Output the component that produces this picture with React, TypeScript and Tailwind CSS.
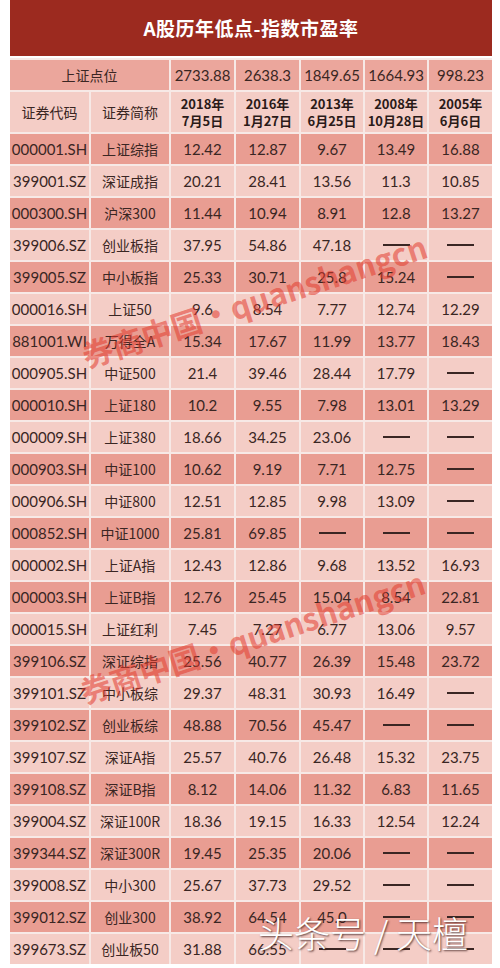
import * as React from "react";

const DASH = "——";

const points = ["2733.88", "2638.3", "1849.65", "1664.93", "998.23"];
const dates = [
  ["2018年", "7月5日"],
  ["2016年", "1月27日"],
  ["2013年", "6月25日"],
  ["2008年", "10月28日"],
  ["2005年", "6月6日"],
];

const rows: string[][] = [
  ["000001.SH", "上证综指", "12.42", "12.87", "9.67", "13.49", "16.88"],
  ["399001.SZ", "深证成指", "20.21", "28.41", "13.56", "11.3", "10.85"],
  ["000300.SH", "沪深300", "11.44", "10.94", "8.91", "12.8", "13.27"],
  ["399006.SZ", "创业板指", "37.95", "54.86", "47.18", DASH, DASH],
  ["399005.SZ", "中小板指", "25.33", "30.71", "25.8", "15.24", DASH],
  ["000016.SH", "上证50", "9.6", "8.54", "7.77", "12.74", "12.29"],
  ["881001.WI", "万得全A", "15.34", "17.67", "11.99", "13.77", "18.43"],
  ["000905.SH", "中证500", "21.4", "39.46", "28.44", "17.79", DASH],
  ["000010.SH", "上证180", "10.2", "9.55", "7.98", "13.01", "13.29"],
  ["000009.SH", "上证380", "18.66", "34.25", "23.06", DASH, DASH],
  ["000903.SH", "中证100", "10.62", "9.19", "7.71", "12.75", DASH],
  ["000906.SH", "中证800", "12.51", "12.85", "9.98", "13.09", DASH],
  ["000852.SH", "中证1000", "25.81", "69.85", DASH, DASH, DASH],
  ["000002.SH", "上证A指", "12.43", "12.86", "9.68", "13.52", "16.93"],
  ["000003.SH", "上证B指", "12.76", "25.45", "15.04", "8.54", "22.81"],
  ["000015.SH", "上证红利", "7.45", "7.27", "6.77", "13.06", "9.57"],
  ["399106.SZ", "深证综指", "25.56", "40.77", "26.39", "15.48", "23.72"],
  ["399101.SZ", "中小板综", "29.37", "48.31", "30.93", "16.49", DASH],
  ["399102.SZ", "创业板综", "48.88", "70.56", "45.47", DASH, DASH],
  ["399107.SZ", "深证A指", "25.57", "40.76", "26.48", "15.32", "23.75"],
  ["399108.SZ", "深证B指", "8.12", "14.06", "11.32", "6.83", "11.65"],
  ["399004.SZ", "深证100R", "18.36", "19.15", "16.33", "12.54", "12.24"],
  ["399344.SZ", "深证300R", "19.45", "25.35", "20.06", DASH, DASH],
  ["399008.SZ", "中小300", "25.67", "37.73", "29.52", DASH, DASH],
  ["399012.SZ", "创业300", "38.92", "64.54", "45.0", DASH, DASH],
  ["399673.SZ", "创业板50", "31.88", "66.55", DASH, DASH, DASH],
];

const grid = "grid grid-cols-[79px_78px_63px_63px_62px_62px_63px] gap-x-[2px]";

function Watermark({ pos }: { pos: string }) {
  return (
    <div
      className={`absolute ${pos} -translate-x-1/2 -translate-y-1/2 rotate-[-18deg] text-[31px] font-bold text-[#e23a2c]/55 whitespace-nowrap font-['Noto_Sans_CJK_SC',sans-serif] leading-none`}
    >
      券商中国·quanshangcn
    </div>
  );
}

export default function App() {
  return (
    <div
      className="relative w-[500px] h-[968px] overflow-hidden bg-white text-[#3a2623]"
      style={{ fontFamily: "Lato, 'Noto Sans CJK SC', sans-serif" }}
    >
      <div className="ml-[10px] w-[482px] flex flex-col gap-y-[2px] bg-[#f7e9e6]">
        <div className="h-[58px] bg-[#9c2a1f] flex items-center justify-center text-white text-[19px] font-bold tracking-[0.5px] font-['Noto_Sans_CJK_SC',sans-serif] border-b-[2px] border-white">
          A股历年低点-指数市盈率
        </div>
        <div className={`${grid} h-[30px] text-[15px]`}>
          <div className="col-span-2 bg-[#eba69c] flex items-center justify-center font-['Noto_Sans_CJK_SC',sans-serif] text-[14px]">
            上证点位
          </div>
          {points.map((p) => (
            <div key={p} className="bg-[#eba69c] flex items-center justify-center">
              {p}
            </div>
          ))}
        </div>
        <div className={`${grid} h-[40px]`}>
          <div className="bg-[#f4cdc6] flex items-center justify-center text-[14px] font-['Noto_Sans_CJK_SC',sans-serif]">
            证券代码
          </div>
          <div className="bg-[#f4cdc6] flex items-center justify-center text-[14px] font-['Noto_Sans_CJK_SC',sans-serif]">
            证券简称
          </div>
          {dates.map((d) => (
            <div
              key={d[0]}
              className="bg-[#f4cdc6] flex flex-col items-center justify-center text-[13px] font-bold leading-[17px] font-['Noto_Sans_CJK_SC',sans-serif] text-[#2a1a18]"
            >
              <span>{d[0]}</span>
              <span>{d[1]}</span>
            </div>
          ))}
        </div>
        {rows.map((r, i) => (
          <div key={r[0]} className={`${grid} h-[30px] text-[15px]`}>
            {r.map((c, j) => (
              <div
                key={j}
                className={`${i % 2 === 0 ? "bg-[#e99d92]" : "bg-[#f4cdc6]"} flex items-center justify-center ${
                  j === 1 ? "font-['Noto_Sans_CJK_SC',sans-serif] text-[14px]" : ""
                }`}
              >
                {c === DASH ? (
                  <span className="block w-[27px] h-[1.5px] bg-[#3a2623]" aria-label={DASH} />
                ) : (
                  c
                )}
              </div>
            ))}
          </div>
        ))}
      </div>

      {/* watermarks */}
      <Watermark pos="left-[254px] top-[300px]" />
      <Watermark pos="left-[252px] top-[636px]" />
      <div
        className="absolute left-[258px] top-[914px] text-[36px] font-light text-white whitespace-nowrap font-['Noto_Sans_CJK_SC',sans-serif] leading-none"
        style={{ textShadow: "1px 1px 2px rgba(60,30,30,0.85)" }}
      >
        头条号 / 天檀
      </div>
    </div>
  );
}
